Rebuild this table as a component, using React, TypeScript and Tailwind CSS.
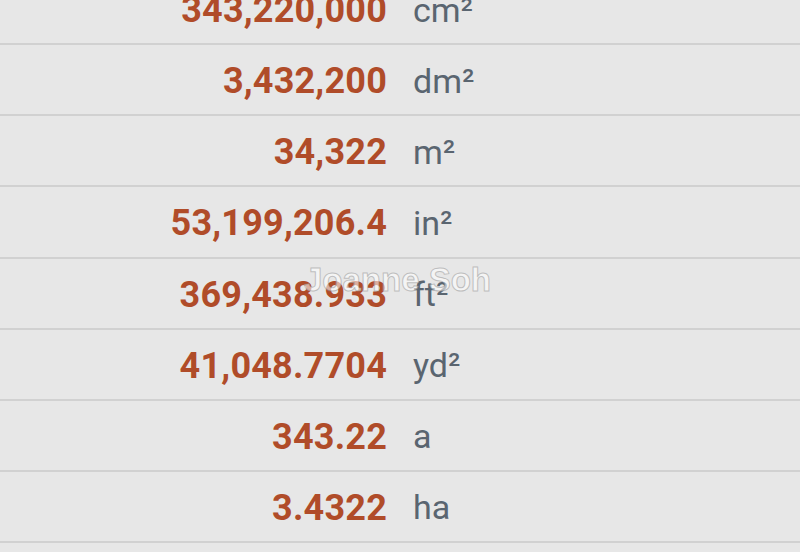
const rows = [
  { value: '343,220,000', unit: 'cm²' },
  { value: '3,432,200', unit: 'dm²' },
  { value: '34,322', unit: 'm²' },
  { value: '53,199,206.4', unit: 'in²' },
  { value: '369,438.933', unit: 'ft²' },
  { value: '41,048.7704', unit: 'yd²' },
  { value: '343.22', unit: 'a' },
  { value: '3.4322', unit: 'ha' },
  { value: '0.034322', unit: 'km²' },
];

export default function App() {
  return (
    <div className="relative w-[800px] h-[552px] overflow-hidden bg-[#e7e7e7] font-['Roboto','Liberation_Sans',sans-serif]">
      <div className="-mt-[26px]">
        {rows.map((r) => (
          <div
            key={r.unit}
            className="flex items-center pt-[3px] h-[71.14px] border-b-2 border-[#d1d1d1]"
          >
            <div className="w-[387px] text-right text-[36px] font-bold text-[#b04c29] tracking-[0.2px]">
              {r.value}
            </div>
            <div className="ml-[26px] text-[34px] text-[#5a6570]">{r.unit}</div>
          </div>
        ))}
      </div>

      {/* watermark */}
      <div className="absolute left-[304px] top-[255px] text-[33px] font-bold font-['Liberation_Sans',sans-serif] text-white/55 [-webkit-text-stroke:1px_rgba(140,140,140,0.5)] pointer-events-none">
        Joanne Soh
      </div>
    </div>
  );
}
